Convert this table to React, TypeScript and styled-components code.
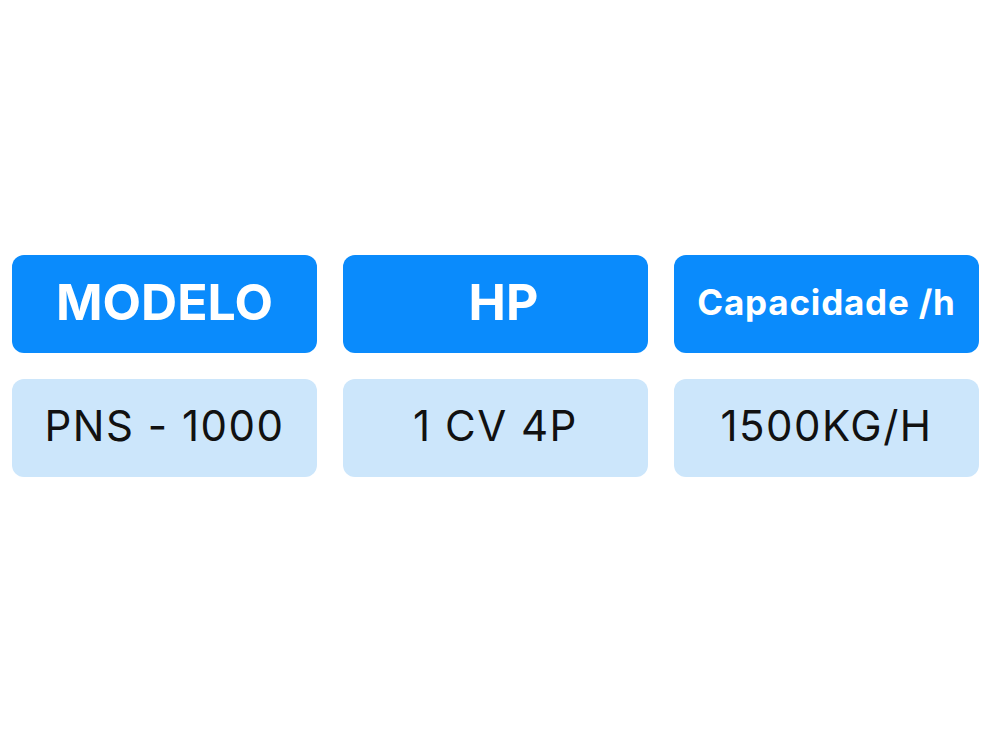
import styled, { createGlobalStyle } from "styled-components";

const GlobalStyle = createGlobalStyle`
  body {
    margin: 0;
    background: #ffffff;
    font-family: Inter, "Liberation Sans", sans-serif;
  }
`;

const Page = styled.div`
  padding: 255px 0 0 12px;
`;

const SpecGrid = styled.div`
  display: grid;
  grid-template-columns: repeat(3, 305px);
  column-gap: 26px;
  row-gap: 26px;
`;

const Cell = styled.div<{
  $header?: boolean;
  $size: number;
  $spacing: number;
  $shift?: number;
}>`
  height: 98px;
  box-sizing: border-box;
  padding-bottom: 5px;
  padding-left: ${(p) => p.$shift || 0}px;
  border-radius: 12px;
  display: flex;
  align-items: center;
  justify-content: center;
  background: ${(p) => (p.$header ? "#0A8BFC" : "#CCE6FB")};
  color: ${(p) => (p.$header ? "#ffffff" : "#111111")};
  font-weight: ${(p) => (p.$header ? 700 : 400)};
  font-size: ${(p) => p.$size}px;
  letter-spacing: ${(p) => p.$spacing}px;
  white-space: nowrap;
`;

const headers = [
  { label: "MODELO", size: 50, spacing: 0, shift: 0 },
  { label: "HP", size: 50, spacing: 0, shift: 16 },
  { label: "Capacidade /h", size: 35, spacing: 0.8, shift: 0 },
];

const values = ["PNS - 1000", "1 CV 4P", "1500KG/H"];

const App = () => {
  return (
    <>
      <GlobalStyle />
      <Page>
        <SpecGrid>
          {headers.map((h) => (
            <Cell
              key={h.label}
              $header
              $size={h.size}
              $spacing={h.spacing}
              $shift={h.shift}
            >
              {h.label}
            </Cell>
          ))}
          {values.map((v) => (
            <Cell key={v} $size={42} $spacing={1.5}>
              {v}
            </Cell>
          ))}
        </SpecGrid>
      </Page>
    </>
  );
};

export default App;
